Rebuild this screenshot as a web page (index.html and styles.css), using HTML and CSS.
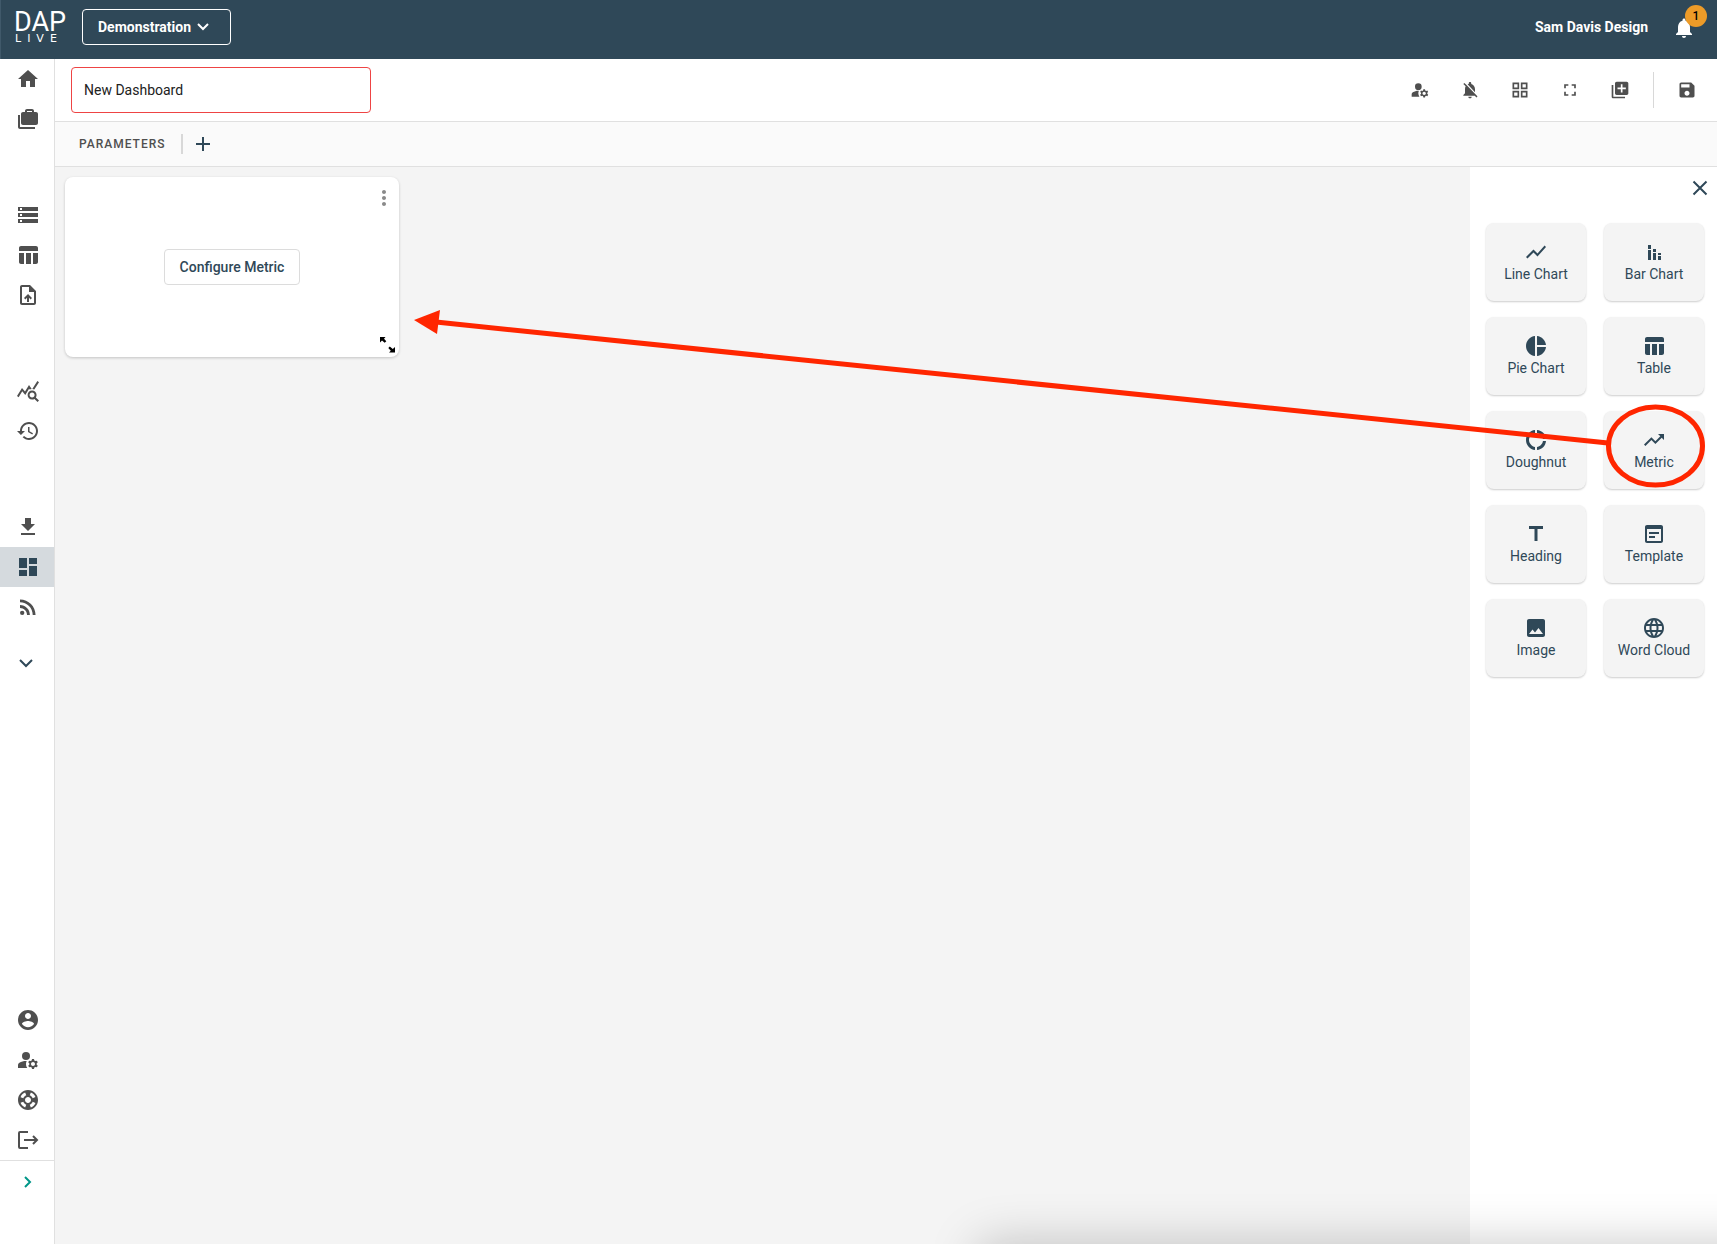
FILE: index.html
```html
<!DOCTYPE html>
<html lang="en">
<head>
    <meta charset="UTF-8">
    <meta name="viewport" content="width=device-width, initial-scale=1.0">
    <title>New Dashboard - DAP Live</title>
    <link rel="stylesheet" href="styles.css">
</head>
<body>
    <header class="header">
        <a href="#" class="logo">
            <span class="logo-top">DAP</span>
            <span class="logo-bottom">LIVE</span>
        </a>
        <button type="button" class="project-button">
            Demonstration
            <svg class="project-arrow" viewBox="0 0 16 16"><path d="M3 5l5 5 5-5"/></svg>
        </button>
        <span class="user-name">Sam Davis Design</span>
        <button type="button" class="bell" aria-label="Notifications">
            <svg class="icon" viewBox="0 0 24 24"><path d="M12 22c1.100 0 2-.9 2-2h-4c0 1.100.89 2 2 2zm6-6v-5c0-3.070-1.640-5.640-4.500-6.320V4c0-.83-.67-1.500-1.500-1.500s-1.500.67-1.500 1.500v.68C7.630 5.360 6 7.920 6 11v5l-2 2v1h16v-1l-2-2z"/></svg>
            <span class="badge">1</span>
        </button>
    </header>

    <div class="layout">
        <nav class="sidebar">
            <div class="nav-group">
                <a href="#" class="nav-item" aria-label="Home"><svg class="icon" viewBox="0 0 24 24"><path d="M10 20v-6h4v6h5v-8h3L12 3 2 12h3v8z"/></svg></a>
                <a href="#" class="nav-item" aria-label="Projects"><svg class="icon" viewBox="0 0 24 24"><path d="M4 8H2v12c0 1.100.9 2 2 2h15v-2H4V8z"/><path fill-rule="evenodd" d="M18 5V4c0-1.100-.9-2-2-2h-5c-1.100 0-2 .9-2 2v1H7c-1.100 0-2 .9-2 2v9c0 1.100.9 2 2 2h13c1.100 0 2-.9 2-2V7c0-1.100-.9-2-2-2h-2zm-7-1h5v1h-5V4z"/></svg></a>
            </div>
            <div class="nav-group">
                <a href="#" class="nav-item" aria-label="Data sources"><svg class="icon" viewBox="0 0 24 24"><path d="M2 20h20v-4H2v4zm2-3h2v2H4v-2zM2 4v4h20V4H2zm4 3H4V5h2v2zm-4 7h20v-4H2v4zm2-3h2v2H4v-2z"/></svg></a>
                <a href="#" class="nav-item" aria-label="Tables"><svg class="icon" viewBox="0 0 24 24"><path d="M10 10h5v11h-5V10zM17 21h3c1.100 0 2-.9 2-2v-9h-5v11zM20 3H5c-1.100 0-2 .9-2 2v3h19V5c0-1.100-.9-2-2-2zM3 19c0 1.100.9 2 2 2h3V10H3v9z"/></svg></a>
                <a href="#" class="nav-item" aria-label="Upload"><svg class="icon" viewBox="0 0 24 24"><path d="M14 2H6c-1.100 0-1.990.9-1.990 2L4 20c0 1.100.89 2 1.990 2H18c1.100 0 2-.9 2-2V8l-6-6zm4 18H6V4h7v5h5v11zM8 15.010l1.410 1.410L11 14.840V19h2v-4.160l1.590 1.590L16 15.010 12.010 11z"/></svg></a>
            </div>
            <div class="nav-group">
                <a href="#" class="nav-item" aria-label="Query"><svg class="icon" viewBox="0 0 24 24"><path d="M19.880 18.470c.44-.7.7-1.510.7-2.390 0-2.490-2.010-4.500-4.500-4.500s-4.500 2.010-4.500 4.500 2.010 4.500 4.490 4.500c.88 0 1.700-.26 2.390-.7L21.580 23 23 21.580l-3.120-3.110zm-3.800.11c-1.380 0-2.500-1.120-2.500-2.500s1.120-2.500 2.500-2.500 2.500 1.120 2.500 2.500-1.120 2.500-2.500 2.500zm-.36-8.500c-.74.02-1.450.18-2.100.45l-.55-.83-3.800 6.180-3.010-3.520-3.630 5.810L1 17l5-8 3 3.500L13 6l2.720 4.080zm2.590.5c-.64-.28-1.330-.45-2.050-.49L21.380 2 23 3.180l-4.690 7.400z"/></svg></a>
                <a href="#" class="nav-item" aria-label="History"><svg class="icon" viewBox="0 0 24 24"><path d="M13 3c-4.970 0-9 4.030-9 9H1l3.890 3.890.07.14L9 12H6c0-3.870 3.130-7 7-7s7 3.130 7 7-3.130 7-7 7c-1.930 0-3.680-.79-4.940-2.060l-1.420 1.420C8.270 19.990 10.510 21 13 21c4.970 0 9-4.030 9-9s-4.030-9-9-9zm-1 5v5l4.280 2.540.72-1.210-3.500-2.080V8H12z"/></svg></a>
            </div>
            <div class="nav-group">
                <a href="#" class="nav-item" aria-label="Downloads"><svg class="icon" viewBox="0 0 24 24"><path d="M19 9h-4V3H9v6H5l7 7 7-7zM5 18v2h14v-2H5z"/></svg></a>
                <a href="#" class="nav-item active" aria-label="Dashboards"><svg class="icon" viewBox="0 0 24 24"><path d="M3 13h8V3H3v10zm0 8h8v-6H3v6zm10 0h8V11h-8v10zm0-18v6h8V3h-8z"/></svg></a>
                <a href="#" class="nav-item" aria-label="Feeds"><svg class="icon" viewBox="0 0 24 24"><circle cx="6.180" cy="17.820" r="2.180"/><path d="M4 4.440v2.830c7.030 0 12.730 5.700 12.730 12.730h2.830c0-8.590-6.970-15.560-15.560-15.560zm0 5.660v2.830c3.900 0 7.070 3.170 7.070 7.070h2.830c0-5.470-4.430-9.900-9.900-9.900z"/></svg></a>
            </div>
            <button type="button" class="nav-more" aria-label="Show more"><svg class="icon line" viewBox="0 0 24 24"><path d="M6 9l6 6 6-6"/></svg></button>

            <div class="nav-bottom">
                <a href="#" class="nav-item" aria-label="Account"><svg class="icon" viewBox="0 0 24 24"><path d="M12 2C6.480 2 2 6.480 2 12s4.480 10 10 10 10-4.480 10-10S17.520 2 12 2zm0 3c1.660 0 3 1.340 3 3s-1.340 3-3 3-3-1.340-3-3 1.340-3 3-3zm0 14.200c-2.500 0-4.710-1.280-6-3.220.03-1.990 4-3.080 6-3.080 1.990 0 5.970 1.090 6 3.080-1.290 1.940-3.500 3.220-6 3.220z"/></svg></a>
                <a href="#" class="nav-item" aria-label="Manage users"><svg class="icon" viewBox="0 0 24 24"><use href="#manage"/></svg></a>
                <a href="#" class="nav-item" aria-label="Support"><svg class="icon" viewBox="0 0 24 24"><path d="M12 2C6.480 2 2 6.480 2 12s4.480 10 10 10 10-4.480 10-10S17.520 2 12 2zm7.460 7.120l-2.780 1.150c-.51-1.360-1.580-2.440-2.950-2.940l1.150-2.780c2.100.8 3.770 2.470 4.580 4.570zM12 15c-1.660 0-3-1.340-3-3s1.340-3 3-3 3 1.340 3 3-1.340 3-3 3zM9.130 4.540l1.170 2.780c-1.380.5-2.470 1.590-2.980 2.970L4.540 9.130c.81-2.110 2.480-3.780 4.590-4.590zM4.540 14.870l2.780-1.150c.51 1.380 1.590 2.460 2.970 2.960l-1.170 2.780c-2.100-.81-3.770-2.480-4.580-4.590zm10.340 4.590l-1.150-2.780c1.370-.51 2.450-1.590 2.950-2.970l2.780 1.170c-.81 2.100-2.480 3.770-4.580 4.580z"/></svg></a>
                <a href="#" class="nav-item" aria-label="Log out"><svg class="icon line" viewBox="0 0 24 24"><path d="M12 4H4a1 1 0 0 0-1 1v14a1 1 0 0 0 1 1h8M8 12h13M17 8l4 4-4 4"/></svg></a>
            </div>
            <button type="button" class="nav-expand" aria-label="Expand menu"><svg class="icon line" viewBox="0 0 24 24"><path d="M9 7l5 5-5 5"/></svg></button>
        </nav>

        <main class="main">
            <div class="toolbar">
                <input type="text" class="title-input" aria-label="Dashboard name" value="New Dashboard">
                <div class="actions">
                    <button type="button" aria-label="Manage access"><svg viewBox="0 0 24 24">
                        <g id="manage">
                            <circle cx="10" cy="8" r="4"/>
                            <path d="M10.670 13.020C10.450 13.010 10.230 13 10 13c-2.420 0-4.680.67-6.610 1.820C2.510 15.340 2 16.320 2 17.350V20h9.260C10.470 18.870 10 17.490 10 16c0-1.070.25-2.070.67-2.980z"/>
                            <path d="M20.750 16c0-.22-.03-.42-.06-.63l1.140-1.010-1-1.730-1.450.49c-.32-.27-.68-.48-1.080-.63L18 11h-2l-.3 1.490c-.4.15-.76.36-1.080.63l-1.450-.49-1 1.730 1.140 1.010c-.03.21-.06.41-.06.63s.03.42.06.63l-1.140 1.010 1 1.730 1.450-.49c.32.27.68.48 1.080.63L16 21h2l.3-1.490c.4-.15.76-.36 1.080-.63l1.450.49 1-1.730-1.140-1.010c.03-.21.06-.41.06-.63zM17 18c-1.100 0-2-.9-2-2s.9-2 2-2 2 .9 2 2-.9 2-2 2z"/>
                        </g>
                    </svg></button>
                    <button type="button" aria-label="Mute alerts"><svg viewBox="0 0 24 24"><path d="M20 18.690L7.840 6.140 5.270 3.490 4 4.760l2.800 2.800v.01c-.52.99-.8 2.160-.8 3.420v5l-2 2v1h13.730l2 2L21 19.720l-1-1.030zM12 22c1.110 0 2-.89 2-2h-4c0 1.110.89 2 2 2zm6-7.320V11c0-3.080-1.640-5.640-4.500-6.320V4c0-.83-.67-1.500-1.500-1.500s-1.500.67-1.500 1.500v.68c-.15.03-.29.08-.42.12-.5.15-.8.3-1.020.44L18 14.680z"/></svg></button>
                    <button type="button" aria-label="Grid"><svg viewBox="0 0 24 24"><path d="M3 3v8h8V3H3zm6 6H5V5h4v4zm-6 4v8h8v-8H3zm6 6H5v-4h4v4zm4-16v8h8V3h-8zm6 6h-4V5h4v4zm-6 4v8h8v-8h-8zm6 6h-4v-4h4v4z"/></svg></button>
                    <button type="button" aria-label="Full screen"><svg viewBox="0 0 24 24"><path d="M7 14H5v5h5v-2H7v-3zm-2-4h2V7h3V5H5v5zm12 7h-3v2h5v-5h-2v3zM14 5v2h3v3h2V5h-5z"/></svg></button>
                    <button type="button" aria-label="Add widget"><svg viewBox="0 0 24 24"><path d="M4 6H2v14c0 1.100.9 2 2 2h14v-2H4V6zm16-4H8c-1.100 0-2 .9-2 2v12c0 1.100.9 2 2 2h12c1.100 0 2-.9 2-2V4c0-1.100-.9-2-2-2zm-1 9h-4v4h-2v-4H9V9h4V5h2v4h4v2z"/></svg></button>
                    <button type="button" class="save" aria-label="Save"><svg viewBox="0 0 24 24"><path d="M17 3H5c-1.110 0-2 .9-2 2v14c0 1.100.89 2 2 2h14c1.100 0 2-.9 2-2V7l-4-4zm-5 16c-1.660 0-3-1.340-3-3s1.340-3 3-3 3 1.340 3 3-1.340 3-3 3zm3-10H5V5h10v4z"/></svg></button>
                </div>
            </div>

            <div class="parameters">
                <h2>PARAMETERS</h2>
                <button type="button" aria-label="Add parameter"><svg class="icon line" viewBox="0 0 24 24"><path d="M12 5v14M5 12h14"/></svg></button>
            </div>

            <div class="workspace">
                <section class="canvas">
                    <article class="card">
                        <button type="button" class="card-menu" aria-label="Widget menu"><svg class="icon" viewBox="0 0 24 24"><path d="M12 8c1.100 0 2-.9 2-2s-.9-2-2-2-2 .9-2 2 .9 2 2 2zm0 2c-1.100 0-2 .9-2 2s.9 2 2 2 2-.9 2-2-.9-2-2-2zm0 6c-1.100 0-2 .9-2 2s.9 2 2 2 2-.9 2-2-.9-2-2-2z"/></svg></button>
                        <button type="button" class="configure">Configure Metric</button>
                        <svg class="resize" viewBox="0 0 16 16"><path d="M1 0h5.500L5 1.700 7.300 4.300 5.700 5.700 3 3.500 1 5.500zM16 15.500h-6l1.800-1.800L9.300 11l1.500-1.500 3 2.500L16 10z"/></svg>
                    </article>
                </section>

                <aside class="panel">
                    <button type="button" class="panel-close" aria-label="Close"><svg class="icon line" viewBox="0 0 24 24"><path d="M5.500 5.500l13 13M18.500 5.500l-13 13"/></svg></button>
                    <div class="tiles">
                        <button type="button" class="tile"><svg class="icon" viewBox="0 0 24 24"><path d="M3.500 18.490l6-6.010 4 4L22 6.920l-1.410-1.410-7.090 7.970-4-4L2 16.990z"/></svg>Line Chart</button>
                        <button type="button" class="tile"><svg class="icon" viewBox="0 0 24 24"><path d="M6 10h3v10H6zM6 5h3v4H6zM16 16h3v4h-3zM16 13h3v2h-3zM11 13h3v7h-3zM11 9h3v3h-3z"/></svg>Bar Chart</button>
                        <button type="button" class="tile"><svg class="icon" viewBox="0 0 24 24"><path d="M11 2v20c-5.070-.5-9-4.790-9-10s3.930-9.500 9-10zm2.030 0v8.990H22c-.47-4.740-4.240-8.520-8.970-8.990zm0 11.010V22c4.740-.47 8.500-4.250 8.970-8.990h-8.970z"/></svg>Pie Chart</button>
                        <button type="button" class="tile"><svg class="icon" viewBox="0 0 24 24"><path d="M10 10h5v11h-5V10zM17 21h3c1.100 0 2-.9 2-2v-9h-5v11zM20 3H5c-1.100 0-2 .9-2 2v3h19V5c0-1.100-.9-2-2-2zM3 19c0 1.100.9 2 2 2h3V10H3v9z"/></svg>Table</button>
                        <button type="button" class="tile"><svg class="icon" viewBox="0 0 24 24"><path d="M11 5.080V2c-5 .5-9 4.810-9 10s4 9.500 9 10v-3.080c-3-.48-6-3.400-6-6.920s3-6.440 6-6.920zM18.970 11H22c-.47-5-4-8.530-9-9v3.080C16 5.510 18.540 8 18.970 11zM13 18.920V22c5-.47 8.530-4 9-9h-3.030c-.43 3-2.970 5.490-5.970 5.920z"/></svg>Doughnut</button>
                        <button type="button" class="tile"><svg class="icon" viewBox="0 0 24 24"><path d="M16 6l2.290 2.290-4.880 4.880-4-4L2 16.590 3.410 18l6-6 4 4 6.300-6.290L22 12V6z"/></svg>Metric</button>
                        <button type="button" class="tile"><svg class="icon" viewBox="0 0 24 24"><path d="M5 4v3h5.500v12h3V7H19V4z"/></svg>Heading</button>
                        <button type="button" class="tile"><svg class="icon" viewBox="0 0 24 24"><path d="M19 3H5c-1.110 0-2 .9-2 2v14c0 1.100.89 2 2 2h14c1.100 0 2-.9 2-2V5c0-1.100-.9-2-2-2zm0 16H5V7h14v12zm-2-7H7v-2h10v2zm-4 4H7v-2h6v2z"/></svg>Template</button>
                        <button type="button" class="tile"><svg class="icon" viewBox="0 0 24 24"><path d="M21 19V5c0-1.100-.9-2-2-2H5c-1.100 0-2 .9-2 2v14c0 1.100.9 2 2 2h14c1.100 0 2-.9 2-2zM8.500 13.500l2.500 3.010L14.500 12l4.500 6H5l3.500-4.500z"/></svg>Image</button>
                        <button type="button" class="tile"><svg class="icon" viewBox="0 0 24 24"><path d="M11.990 2C6.470 2 2 6.480 2 12s4.470 10 9.990 10C17.520 22 22 17.520 22 12S17.520 2 11.990 2zm6.930 6h-2.950c-.32-1.250-.78-2.450-1.380-3.560 1.840.63 3.370 1.910 4.330 3.560zM12 4.040c.83 1.200 1.480 2.530 1.910 3.960h-3.820c.43-1.430 1.080-2.760 1.910-3.960zM4.260 14C4.100 13.360 4 12.690 4 12s.1-1.360.26-2h3.380c-.08.66-.14 1.320-.14 2s.06 1.340.14 2H4.260zm.82 2h2.950c.32 1.250.78 2.450 1.380 3.560-1.840-.63-3.370-1.900-4.330-3.560zm2.950-8H5.080c.96-1.660 2.490-2.930 4.330-3.560C8.810 5.550 8.350 6.750 8.030 8zM12 19.960c-.83-1.200-1.480-2.530-1.910-3.960h3.820c-.43 1.430-1.080 2.760-1.910 3.960zM14.340 14H9.660c-.09-.66-.16-1.320-.16-2s.07-1.350.16-2h4.680c.09.65.16 1.320.16 2s-.07 1.340-.16 2zm.25 5.560c.6-1.110 1.060-2.310 1.380-3.560h2.950c-.96 1.650-2.490 2.930-4.330 3.560zM16.360 14c.08-.66.14-1.320.14-2s-.06-1.340-.14-2h3.380c.16.64.26 1.310.26 2s-.1 1.360-.26 2h-3.380z"/></svg>Word Cloud</button>
                    </div>
                </aside>
            </div>
        </main>
    </div>

    <!-- arrow from the Metric tile to the widget it creates -->
    <svg class="annotation" viewBox="0 0 1717 500">
        <path class="annotation-line" d="M1608 443L436 322"/>
        <path class="annotation-head" d="M414 320l26-10-3 24z"/>
        <ellipse class="annotation-line" cx="1655.500" cy="446" rx="47" ry="39"/>
    </svg>
    <div class="bottom-shadow"></div>
</body>
</html>
```

FILE: styles.css
```css
* {
    box-sizing: border-box;
    margin: 0;
    padding: 0;
}

body {
    position: relative;
    display: flex;
    flex-direction: column;
    min-height: 100vh;
    font-family: Roboto, Arial, sans-serif;
    font-size: 14px;
    color: #212121;
    background-color: white;
}

button {
    border: none;
    background: none;
    font-family: inherit;
    font-size: 14px;
    color: #2f4858;
    cursor: pointer;
}

a {
    color: inherit;
    text-decoration: none;
}

svg {
    display: block;
    fill: currentColor;
}

.icon {
    width: 24px;
    height: 24px;
}

.line {
    fill: none;
    stroke: currentColor;
    stroke-width: 2;
}

/* Header */
.header {
    display: flex;
    align-items: flex-start;
    height: 59px;
    padding: 9px 21px 0 13px;
    border-left: 1px solid #40596a;
    background-color: #2f4858;
    color: white;
}

.logo {
    width: 50px;
    margin-right: 18px;
}

.logo-top {
    display: block;
    font-size: 27px;
    line-height: 26px;
}

.logo-bottom {
    display: block;
    padding-left: 1px;
    font-family: "DejaVu Sans", sans-serif;
    font-size: 11px;
    line-height: 8px;
    letter-spacing: 6px;
}

.project-button {
    display: flex;
    align-items: center;
    gap: 4px;
    width: 149px;
    height: 36px;
    padding: 0 15px;
    border: 1px solid white;
    border-radius: 4px;
    color: white;
    font-weight: 700;
}

.project-arrow {
    width: 16px;
    height: 16px;
    fill: none;
    stroke: currentColor;
    stroke-width: 2;
}

.user-name {
    margin-left: auto;
    line-height: 36px;
    font-weight: 700;
}

.bell {
    position: relative;
    margin: 7px 0 0 24px;
    color: white;
}

.badge {
    position: absolute;
    top: -11px;
    right: -11px;
    width: 22px;
    height: 22px;
    border-radius: 50%;
    background-color: #ed9b28;
    color: black;
    font-size: 12px;
    font-weight: 500;
    line-height: 22px;
    text-align: center;
}

/* Sidebar */
.layout {
    display: flex;
    flex: 1;
}

.sidebar {
    display: flex;
    flex-direction: column;
    width: 55px;
    border-right: 1px solid #e0e0e0;
    color: #4f4f4f;
}

.nav-group {
    margin-bottom: 56px;
}

.nav-group:nth-of-type(4) {
    margin-bottom: 24px;
}

.nav-item {
    display: flex;
    align-items: center;
    height: 40px;
    padding-left: 16px;
}

.nav-item.active {
    background-color: #d5dade;
    color: #2f4858;
}

.nav-more {
    padding-left: 14px;
}

.nav-bottom {
    margin-top: auto;
    border-bottom: 1px solid #e0e0e0;
}

.nav-expand {
    height: 83px;
    padding: 0 0 42px 16px;
    color: #009688;
}

/* Main area */
.main {
    display: flex;
    flex: 1;
    flex-direction: column;
}

.toolbar {
    display: flex;
    align-items: center;
    justify-content: space-between;
    height: 63px;
    padding: 0 20px 0 16px;
    border-bottom: 1px solid #e0e0e0;
}

.title-input {
    width: 300px;
    height: 46px;
    padding: 0 12px;
    border: 1px solid #ee4444;
    border-radius: 4px;
    font-family: inherit;
    font-size: 14px;
    color: #212121;
    outline: none;
}

.actions {
    display: flex;
    align-items: center;
    gap: 30px;
}

.actions button {
    color: #4f4f4f;
}

.actions svg {
    width: 20px;
    height: 20px;
}

.actions .save {
    margin-left: -7px;
    padding: 8px 0 8px 23px;
    border-left: 1px solid #d8d8d8;
}

.parameters {
    display: flex;
    align-items: center;
    height: 45px;
    padding-left: 24px;
    border-bottom: 1px solid #e0e0e0;
    background-color: #fafafa;
}

.parameters h2 {
    padding-right: 15px;
    border-right: 2px solid #d8d8d8;
    color: #4f4f4f;
    font-size: 12px;
    font-weight: 500;
    line-height: 20px;
    letter-spacing: 1px;
}

.parameters button {
    margin-left: 8px;
}

.workspace {
    display: flex;
    flex: 1;
}

.canvas {
    flex: 1;
    padding: 10px;
    background-color: #f4f4f4;
}

.card {
    position: relative;
    display: flex;
    align-items: center;
    justify-content: center;
    width: 334px;
    height: 180px;
    border-radius: 8px;
    background-color: white;
    box-shadow: 0 1px 3px rgba(0, 0, 0, 0.2);
}

.card-menu {
    position: absolute;
    top: 9px;
    right: 3px;
    color: #8a8a8a;
}

.configure {
    height: 36px;
    padding: 0 15px;
    border: 1px solid #dcdcdc;
    border-radius: 4px;
    font-weight: 500;
}

.resize {
    position: absolute;
    right: 4px;
    bottom: 4px;
    width: 16px;
    height: 16px;
    color: black;
}

/* Widget panel */
.panel {
    width: 247px;
    background-color: white;
}

.panel-close {
    display: block;
    margin: 9px 5px 23px auto;
}

.tiles {
    display: grid;
    grid-template-columns: 1fr 1fr;
    gap: 16px 18px;
    padding: 0 13px 0 16px;
}

.tile {
    display: flex;
    flex-direction: column;
    align-items: center;
    height: 78px;
    padding-top: 17px;
    border-radius: 8px;
    background-color: #f4f4f4;
    box-shadow: 0 1px 2px rgba(0, 0, 0, 0.2);
    line-height: 20px;
}

/* Overlays */
.annotation {
    position: absolute;
    top: 0;
    left: 0;
    width: 100%;
    pointer-events: none;
}

.annotation-line {
    fill: none;
    stroke: #ff2600;
    stroke-width: 5;
}

.annotation-head {
    fill: #ff2600;
}

.bottom-shadow {
    position: absolute;
    right: 0;
    bottom: 0;
    left: 50%;
    height: 60px;
    overflow: hidden;
    pointer-events: none;
}

.bottom-shadow::after {
    content: "";
    position: absolute;
    top: 100%;
    right: -60px;
    left: 14%;
    height: 80px;
    box-shadow: 0 0 50px rgba(0, 0, 0, 0.22);
}
```
